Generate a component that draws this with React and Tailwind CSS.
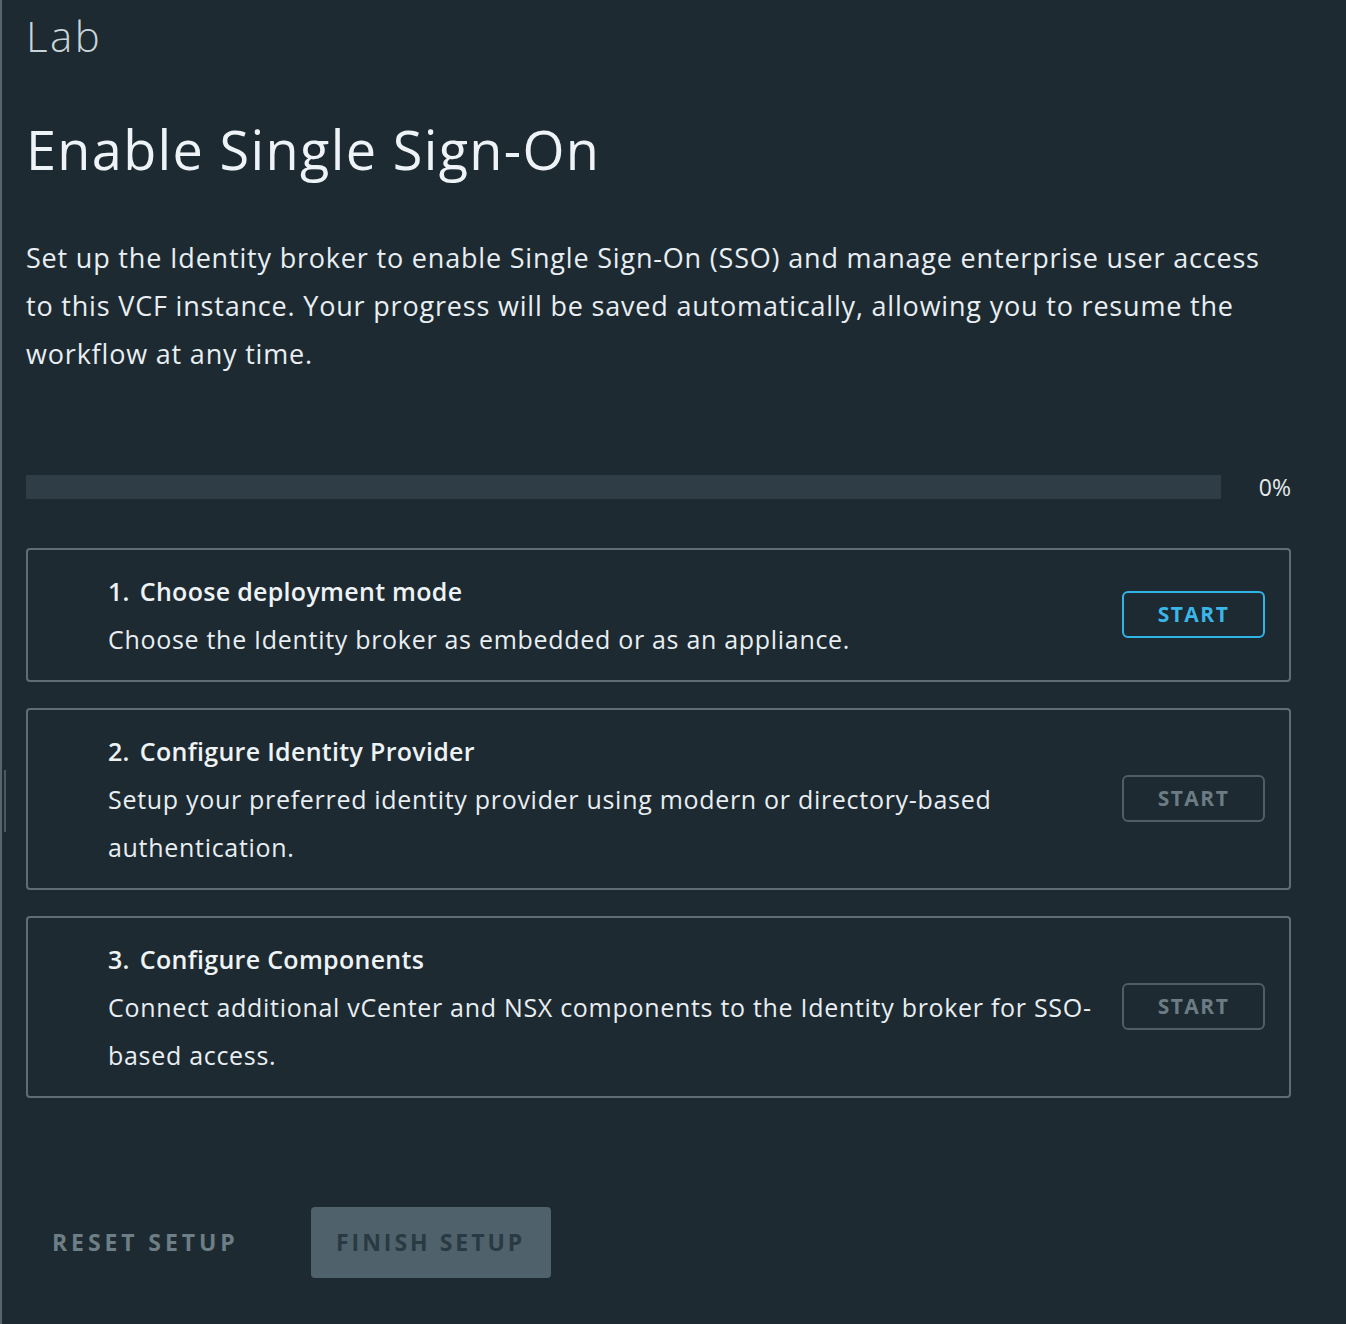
import React from 'react';

const steps = [
  {
    n: '1.',
    title: 'Choose deployment mode',
    desc: 'Choose the Identity broker as embedded or as an appliance.',
    active: true,
  },
  {
    n: '2.',
    title: 'Configure Identity Provider',
    desc: 'Setup your preferred identity provider using modern or directory-based authentication.',
    active: false,
  },
  {
    n: '3.',
    title: 'Configure Components',
    desc: 'Connect additional vCenter and NSX components to the Identity broker for SSO-based access.',
    active: false,
  },
];

const StepCard = ({ step }) => (
  <div className="flex items-center border-2 border-[#5f6e75] rounded-[4px] pl-[80px] pr-[24px] py-[17px] gap-5">
    <div className="flex-1 min-w-0">
      <div className="text-[25px] leading-[48px] font-semibold tracking-[0.012em] text-[#eef3f5]">
        <span>{step.n}</span>
        <span className="ml-[10px]">{step.title}</span>
      </div>
      <p className="text-[25px] leading-[48px] tracking-[0.028em] text-[#e8eef1]">{step.desc}</p>
    </div>
    <button
      className={
        step.active
          ? 'w-[143px] h-[47px] shrink-0 rounded-[6px] border-2 border-[#2fb4e6] text-[#3ab6e8] text-[21px] font-bold tracking-[0.07em]'
          : 'w-[143px] h-[47px] shrink-0 rounded-[6px] border-2 border-[#4f5e66] text-[#6c7c84] text-[21px] font-bold tracking-[0.07em]'
      }
    >
      START
    </button>
  </div>
);

export default function App() {
  return (
    <div
      className="relative min-h-[1324px] bg-[#1e2a31] border-l-2 border-[#56646b] pl-[24px] pr-[55px] pb-[46px]"
      style={{ fontFamily: '"Open Sans", "Noto Sans", sans-serif' }}
    >
      {/* side resize handle */}
      <div className="absolute left-[2px] top-[770px] w-[2px] h-[62px] bg-[#4a5960]" />

      <div className="pt-[8px] text-[42px] leading-[56px] font-light tracking-[0.06em] text-[#c9d4d9]">Lab</div>

      <h1 className="mt-[47px] text-[54px] leading-[76px] font-normal tracking-[0.025em] text-[#edf3f6]">
        Enable Single Sign-On
      </h1>

      <p className="mt-[47px] text-[27px] leading-[48px] tracking-[0.03em] text-[#e8eef1] max-w-[1265px]">
        Set up the Identity broker to enable Single Sign-On (SSO) and manage enterprise user access to this VCF
        instance. Your progress will be saved automatically, allowing you to resume the workflow at any time.
      </p>

      <div className="mt-[92px] flex items-center gap-[38px]">
        <div className="flex-1 h-[24px] bg-[#2f3e46]" />
        <span className="text-[23px] text-[#e3eaee]">0%</span>
      </div>

      <div className="mt-[43px] flex flex-col gap-[26px]">
        {steps.map((s) => (
          <StepCard key={s.n} step={s} />
        ))}
      </div>

      <div className="mt-[109px] flex items-center gap-[72px] pl-[26px]">
        <button className="text-[23px] font-bold tracking-[0.17em] text-[#6d7e86]">RESET SETUP</button>
        <button className="w-[240px] h-[71px] rounded-[4px] bg-[#4f616b] text-[23px] font-bold tracking-[0.13em] text-[#2a3a42]">
          FINISH SETUP
        </button>
      </div>
    </div>
  );
}
